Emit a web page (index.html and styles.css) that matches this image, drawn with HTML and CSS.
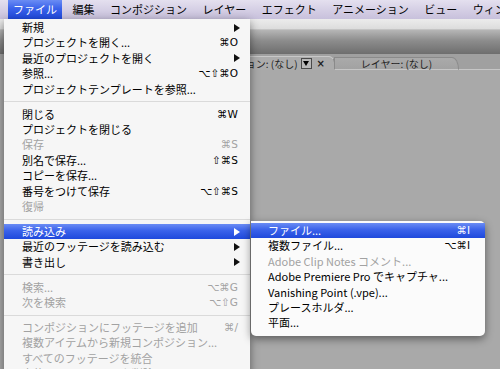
FILE: index.html
```html
<!DOCTYPE html>
<html lang="ja">
<head>
<meta charset="utf-8">
<title>File menu</title>
<link rel="stylesheet" href="styles.css">
</head>
<body>
<div class="screen">
  <nav class="menubar">
    <span class="mb-item active">ファイル</span>
    <span class="mb-item">編集</span>
    <span class="mb-item">コンポジション</span>
    <span class="mb-item">レイヤー</span>
    <span class="mb-item">エフェクト</span>
    <span class="mb-item">アニメーション</span>
    <span class="mb-item">ビュー</span>
    <span class="mb-item">ウィンドウ</span>
  </nav>

  <div class="app">
    <div class="toolbar"></div>
    <div class="header"></div>
    <div class="tabbar">
      <div class="tab tab-active">
        <span class="tab-label">コンポジション: (なし)</span>
        <span class="dd"><span class="dd-tri"></span></span>
        <span class="close">×</span>
      </div>
      <div class="tab tab-inactive">レイヤー: (なし)</div>
      <div class="tab-fill"></div>
    </div>
    <div class="panel"></div>
  </div>

  <div class="menu main-menu">
    <div class="item"><span class="label">新規</span><span class="arrow"></span></div>
    <div class="item"><span class="label">プロジェクトを開く...</span><span class="key">⌘O</span></div>
    <div class="item"><span class="label">最近のプロジェクトを開く</span><span class="arrow"></span></div>
    <div class="item"><span class="label">参照...</span><span class="key">⌥⇧⌘O</span></div>
    <div class="item"><span class="label">プロジェクトテンプレートを参照...</span></div>
    <div class="sep"></div>
    <div class="item"><span class="label">閉じる</span><span class="key">⌘W</span></div>
    <div class="item"><span class="label">プロジェクトを閉じる</span></div>
    <div class="item disabled"><span class="label">保存</span><span class="key">⌘S</span></div>
    <div class="item"><span class="label">別名で保存...</span><span class="key">⇧⌘S</span></div>
    <div class="item"><span class="label">コピーを保存...</span></div>
    <div class="item"><span class="label">番号をつけて保存</span><span class="key">⌥⇧⌘S</span></div>
    <div class="item disabled"><span class="label">復帰</span></div>
    <div class="sep"></div>
    <div class="item hl"><span class="label">読み込み</span><span class="arrow"></span></div>
    <div class="item"><span class="label">最近のフッテージを読み込む</span><span class="arrow"></span></div>
    <div class="item"><span class="label">書き出し</span><span class="arrow"></span></div>
    <div class="sep"></div>
    <div class="item disabled"><span class="label">検索...</span><span class="key">⌥⌘G</span></div>
    <div class="item disabled"><span class="label">次を検索</span><span class="key">⌥⇧G</span></div>
    <div class="sep"></div>
    <div class="item disabled"><span class="label">コンポジションにフッテージを追加</span><span class="key">⌘/</span></div>
    <div class="item disabled"><span class="label">複数アイテムから新規コンポジション...</span></div>
    <div class="item disabled"><span class="label">すべてのフッテージを統合</span></div>
    <div class="item disabled"><span class="label">未使用のフッテージを削除</span></div>
  </div>

  <div class="menu sub-menu">
    <div class="item hl"><span class="label">ファイル...</span><span class="key">⌘I</span></div>
    <div class="item"><span class="label">複数ファイル...</span><span class="key">⌥⌘I</span></div>
    <div class="item disabled"><span class="label">Adobe Clip Notes コメント...</span></div>
    <div class="item"><span class="label">Adobe Premiere Pro でキャプチャ...</span></div>
    <div class="item"><span class="label">Vanishing Point (.vpe)...</span></div>
    <div class="item"><span class="label">プレースホルダ...</span></div>
    <div class="item"><span class="label">平面...</span></div>
  </div>
</div>
</body>
</html>
```

FILE: styles.css
```css
html, body {
  margin: 0;
  padding: 0;
}

body {
  font-family: "Noto Sans CJK JP", "Noto Sans", sans-serif;
  font-size: 11px;
  color: #000;
}

.screen {
  position: relative;
  width: 500px;
  height: 369px;
  overflow: hidden;
  background: #a9a9a9;
}

/* ---------- menu bar ---------- */
.menubar {
  display: flex;
  gap: 5.5px;
  height: 19px;
  padding-left: 8px;
  box-sizing: border-box;
  background: linear-gradient(#e4e0ef, #d4cee4 55%, #c8c1dc);
  white-space: nowrap;
}

.mb-item {
  padding: 0 5px;
  line-height: 19px;
}

.mb-item.active {
  color: #fff;
  background: linear-gradient(#6a8cf4, #3a62ea 45%, #1f49dc);
}

/* ---------- application window ---------- */
.app {
  display: flex;
  flex-direction: column;
  height: 350px;
}

.toolbar {
  height: 10px;
  background: linear-gradient(#ececec, #dcdcdc);
  border-bottom: 1px solid #c4c4c4;
}

.header {
  height: 24px;
  background: linear-gradient(#b6b6b6, #8c8c8c 45%, #6e6e6e);
}

.tabbar {
  display: flex;
  align-items: flex-end;
  height: 16px;
  padding-left: 160px;
  background: #a0a0a0;
}

.tab {
  height: 13px;
  box-sizing: border-box;
  font-size: 10px;
  line-height: 12px;
  color: #1e1e1e;
  white-space: nowrap;
}

.tab-active {
  display: flex;
  align-items: center;
  justify-content: flex-end;
  gap: 3px;
  width: 176px;
  height: 14px;
  padding-right: 10px;
  background: #acacac;
  border-top: 1px solid #c8c8c8;
  border-right: 1px solid #8a8a8a;
  border-top-right-radius: 7px 12px;
}

.dd {
  display: flex;
  align-items: center;
  justify-content: center;
  width: 11px;
  height: 11px;
  box-sizing: border-box;
  border: 1px solid #4a4a4a;
  background: #b8b8b8;
}

.dd-tri {
  width: 0;
  height: 0;
  border-top: 5px solid #000;
  border-left: 3px solid transparent;
  border-right: 3px solid transparent;
}

.close {
  margin-left: 2px;
  font-family: "DejaVu Sans", sans-serif;
  font-weight: bold;
  font-size: 10px;
}

.tab-inactive {
  width: 125px;
  margin-left: -2px;
  text-align: center;
  background: linear-gradient(#aaaaaa, #a2a2a2);
  border: 1px solid #8a8a8a;
  border-bottom: 1px solid #c6c6c6;
  border-top-right-radius: 7px 12px;
}

.tab-fill {
  flex: 1;
  height: 1px;
  background: #c6c6c6;
}

.panel {
  flex: 1;
  background: #a9a9a9;
}

/* ---------- menus ---------- */
.menu {
  position: absolute;
  background: #f6f6f6;
  box-shadow: 0 3px 9px rgba(0, 0, 0, 0.45);
  white-space: nowrap;
}

.main-menu {
  left: 4px;
  top: 19px;
  width: 246px;
  height: 360px;
  padding-top: 1px;
  box-sizing: border-box;
}

.sub-menu {
  left: 251px;
  top: 221px;
  width: 234px;
  height: 115px;
  padding-top: 2px;
  box-sizing: border-box;
  border-radius: 0 5px 5px 5px;
  background: #fbfbfb;
}

.item {
  display: flex;
  align-items: center;
  height: 15.4px;
  padding: 0 12px 0 18px;
  line-height: 15.4px;
}

.sub-menu .item {
  padding: 0 15px 0 17px;
}

.label {
  flex: 1;
}

.key {
  font-family: "DejaVu Sans", sans-serif;
  font-size: 10.5px;
}

.arrow {
  width: 0;
  height: 0;
  margin-right: -2px;
  border-left: 6px solid #111;
  border-top: 4px solid transparent;
  border-bottom: 4px solid transparent;
}

.item.disabled {
  color: #a2a2a2;
}

.item.disabled .arrow {
  border-left-color: #a2a2a2;
}

.item.hl {
  color: #fff;
  background: linear-gradient(#6a8cf4, #3a62ea 45%, #1f49dc);
}

.item.hl .arrow {
  border-left-color: #fff;
}

.sep {
  display: flex;
  align-items: center;
  height: 9.6px;
}

.sep::after {
  content: "";
  flex: 1;
  height: 1px;
  background: #dadada;
}
```
